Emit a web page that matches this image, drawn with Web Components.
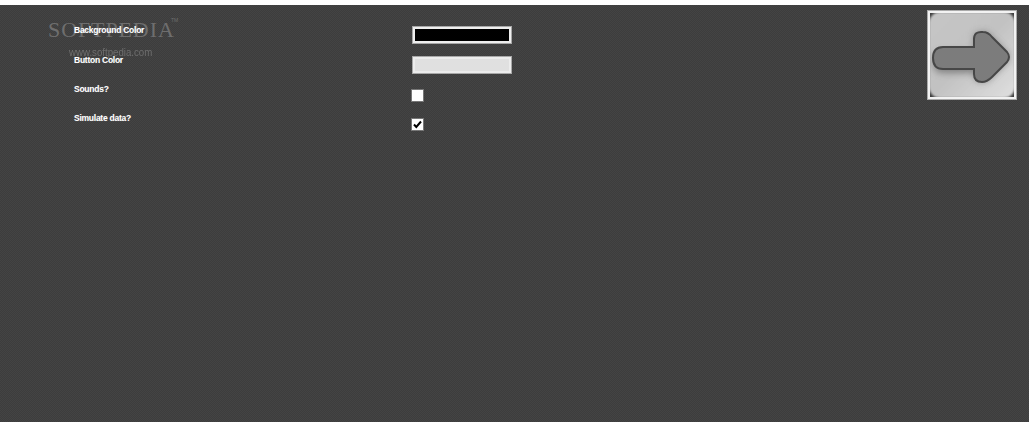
<!DOCTYPE html>
<html>
<head>
<meta charset="utf-8">
<title>Settings</title>
<style>
html, body { margin: 0; background: #fff; }
</style>
</head>
<body>
<settings-page>
    <soft-watermark slot="mark"></soft-watermark>
    <setting-row label="Background Color"><color-field color="#000" ring="#eeeeee"></color-field></setting-row>
    <setting-row label="Button Color"><color-field color="#e0e0e0" ring="#ececec"></color-field></setting-row>
    <setting-row label="Sounds?" style="margin-top:3px; --lift:-5px"><check-field></check-field></setting-row>
    <setting-row label="Simulate data?" style="margin-top:4px; --lift:-5px"><check-field checked></check-field></setting-row>
    <arrow-button slot="action"></arrow-button>
</settings-page>

<script>
class SettingsPage extends HTMLElement {
    constructor() {
        super();
        this.attachShadow({mode:'open'});
        this.shadowRoot.innerHTML = `
        <style>
        :host {
            display: flex;
            position: relative;
            box-sizing: border-box;
            height: 417px;
            margin-top: 5px;
            padding: 5px 12px 0 74px;
            font-family: "Liberation Sans", Arial, sans-serif;
            background-color: #404040;
            background-image: conic-gradient(#444 25%, #3d3d3d 0 50%, #444 0 75%, #3d3d3d 0);
            background-size: 2px 2px;
        }
        form {
            flex: 1;
            display: flex;
            flex-direction: column;
            gap: 12px;
            padding-top: 16px;
            margin: 0;
        }
        </style>
        <slot name="mark"></slot>
        <form><slot></slot></form>
        <slot name="action"></slot>
        `;
    }
}

class SoftWatermark extends HTMLElement {
    constructor() {
        super();
        this.attachShadow({mode:'open'});
        this.shadowRoot.innerHTML = `
        <style>
        :host { position: absolute; left: 48px; top: 12px; width: 135px; height: 50px; color: #6e6e6e; }
        .name { position: absolute; left: 0; top: 0; font: 22px/26px "Liberation Serif", serif; letter-spacing: 0.9px; white-space: nowrap; }
        .tm { position: absolute; left: 123px; top: -1px; font: 5px/8px "Liberation Sans", sans-serif; }
        .url { position: absolute; left: 21px; top: 29px; font: 11.5px/13px "Liberation Sans", sans-serif; white-space: nowrap; transform: scaleX(.84); transform-origin: left; }
        </style>
        <span class="name">SOFTPEDIA</span><span class="tm">TM</span>
        <span class="url">www.softpedia.com</span>
        `;
    }
}

class SettingRow extends HTMLElement {
    constructor() {
        super();
        this.attachShadow({mode:'open'});
        this.shadowRoot.innerHTML = `
        <style>
        :host { display: grid; grid-template-columns: 338px auto; align-items: center; position: relative; }
        label { align-self: start; margin-top: var(--lift, -1px); color: #fff; font-size: 8.5px; letter-spacing: -0.25px; font-weight: bold; line-height: 10px; white-space: nowrap; text-shadow: 0 0 1px rgba(255,255,255,.3); }
        </style>
        <label></label>
        <div><slot></slot></div>
        `;
    }
    connectedCallback() {
        this.shadowRoot.querySelector('label').textContent = this.getAttribute('label');
    }
}

class ColorField extends HTMLElement {
    constructor() {
        super();
        this.attachShadow({mode:'open'});
        this.shadowRoot.innerHTML = `
        <style>
        :host { display: block; box-sizing: border-box; width: 100px; height: 18px; border: 1px solid #a8a8a8; }
        div { box-sizing: border-box; height: 100%; border: 2px solid; }
        </style>
        <div></div>
        `;
    }
    connectedCallback() {
        const swatch = this.shadowRoot.querySelector('div');
        swatch.style.background = this.getAttribute('color');
        swatch.style.borderColor = this.getAttribute('ring');
    }
}

class CheckField extends HTMLElement {
    constructor() {
        super();
        this.attachShadow({mode:'open'});
        this.shadowRoot.innerHTML = `
        <style>
        :host { display: block; box-sizing: border-box; width: 13px; height: 13px; margin-left: -1px; background: #fff; border: 1px solid #777; }
        svg { display: none; width: 11px; height: 11px; }
        :host([checked]) svg { display: block; }
        </style>
        <svg viewBox="0 0 11 11"><path d="M2 5.5 L4.3 8 L9 2.5" fill="none" stroke="#000" stroke-width="2"/></svg>
        `;
    }
}

class ArrowButton extends HTMLElement {
    constructor() {
        super();
        this.attachShadow({mode:'open'});
        this.shadowRoot.innerHTML = `
        <style>
        :host { display: block; box-sizing: border-box; width: 90px; height: 90px; border: 1px solid #aaa; background: #f2f2f2; padding: 2px; }
        svg { display: block; width: 84px; height: 84px; }
        </style>
        <svg viewBox="0 0 84 84">
            <defs>
                <linearGradient id="face" x1="0" y1="0" x2="1" y2="1">
                    <stop offset="0" stop-color="#c6c6c6"/>
                    <stop offset="0.5" stop-color="#c2c2c2"/>
                    <stop offset="1" stop-color="#e0e0e0"/>
                </linearGradient>
                <filter id="soft" x="-20%" y="-20%" width="140%" height="140%"><feGaussianBlur stdDeviation="3.5"/></filter>
                <filter id="edge" x="-5%" y="-5%" width="110%" height="110%"><feGaussianBlur stdDeviation="0.7"/></filter>
                <filter id="corner" x="-5%" y="-5%" width="110%" height="110%"><feGaussianBlur stdDeviation="0.8"/></filter>
                <clipPath id="tile"><rect width="84" height="84"/></clipPath>
            </defs>
            <g clip-path="url(#tile)">
                <rect width="84" height="84" fill="#3c3c3c"/>
                <rect x="-1" y="-1" width="86" height="86" rx="11" fill="url(#face)" filter="url(#corner)"/>
                <path d="M13 38 H44 V26 Q44 18 53 19 Q58 19 62 24 L77 39 Q81 44 77 49 L62 64 Q57 69 52 69 Q44 69 44 61 V60 H13 Q3 60 3 49 Q3 38 13 38Z" fill="#555" opacity=".6" filter="url(#soft)"/>
                <path d="M13 34 H44 V26 Q44 18 53 19 Q58 19 62 24 L77 39 Q81 44 77 49 L62 64 Q57 69 52 69 Q44 69 44 61 V56 H13 Q3 56 3 45 Q3 34 13 34Z" fill="#7c7c7c" stroke="#474747" stroke-width="2" filter="url(#edge)"/>
            </g>
        </svg>
        `;
    }
}

customElements.define('settings-page', SettingsPage);
customElements.define('soft-watermark', SoftWatermark);
customElements.define('setting-row', SettingRow);
customElements.define('color-field', ColorField);
customElements.define('check-field', CheckField);
customElements.define('arrow-button', ArrowButton);
</script>
</body>
</html>
